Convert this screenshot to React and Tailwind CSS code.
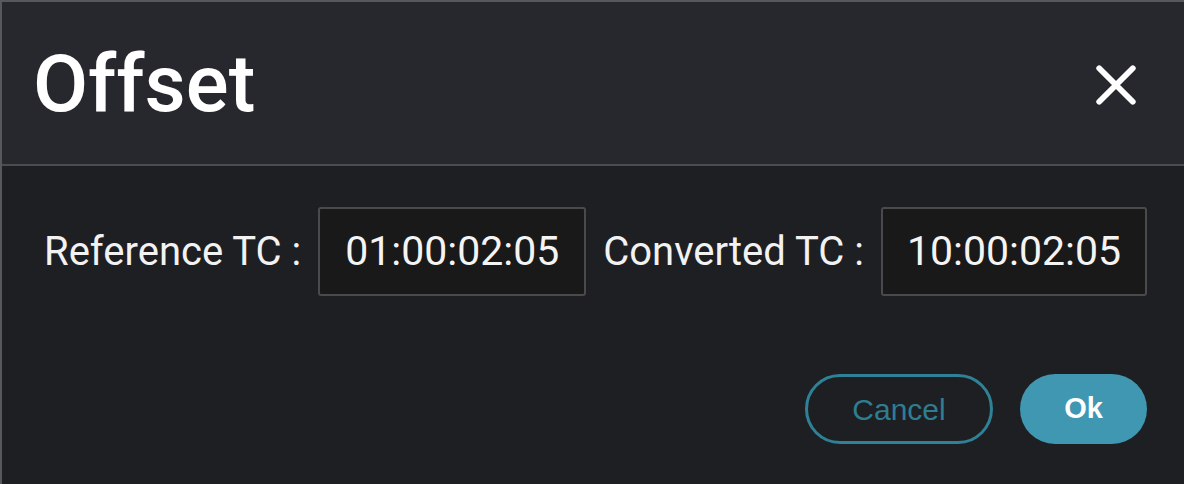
import React from "react";

function TcField({ label, value, width }) {
  return (
    <div className="flex items-center">
      <span className="text-[40px] text-[#f2f2f2] whitespace-nowrap">{label}</span>
      <div
        className={`ml-[17px] h-[89px] ${width} flex items-center justify-center rounded-[3px] border-2 border-[#4a4a4c] bg-[#1a191a] text-[41px] text-[#f4f4f4]`}
      >
        {value}
      </div>
    </div>
  );
}

export default function App() {
  return (
    <div
      className="w-[1184px] h-[484px] flex flex-col overflow-hidden border-t-2 border-l-2 border-[#56585c] bg-[#1e1f22]"
      style={{ fontFamily: "Roboto, 'Liberation Sans', sans-serif" }}
    >
      {/* header */}
      <div className="h-[162px] shrink-0 flex items-center justify-between bg-[#26282d] pl-[31px] pr-[46px]">
        <h1 className="text-[80px] font-medium leading-none text-white pt-[2px]">Offset</h1>
        <button className="w-[44px] h-[44px] mt-[4px] flex items-center justify-center text-white" title="Close">
          <svg viewBox="0 0 40 40" width="42" height="42" fill="none" stroke="currentColor" strokeWidth="5.5" strokeLinecap="round">
            <path d="M4 4 L36 36 M36 4 L4 36" />
          </svg>
        </button>
      </div>
      <div className="h-[2px] shrink-0 bg-[#4a4c50]" />

      {/* body */}
      <div className="flex-1 flex flex-col pl-[42px] pr-[37px] pt-[41px]">
        <div className="flex items-center justify-between">
          <TcField label="Reference TC :" value="01:00:02:05" width="w-[268px]" />
          <TcField label="Converted TC :" value="10:00:02:05" width="w-[266px]" />
        </div>

        <div
          className="mt-[78px] flex items-center justify-end gap-[27px]"
          style={{ fontFamily: "'Liberation Sans', Arial, sans-serif" }}
        >
          <button className="w-[188px] h-[70px] rounded-full border-[3px] border-[#2e8196] text-[30px] text-[#2f7d90]">
            Cancel
          </button>
          <button className="w-[127px] h-[70px] rounded-full bg-[#3f97b1] text-[29px] font-bold text-white">
            Ok
          </button>
        </div>
      </div>
    </div>
  );
}
